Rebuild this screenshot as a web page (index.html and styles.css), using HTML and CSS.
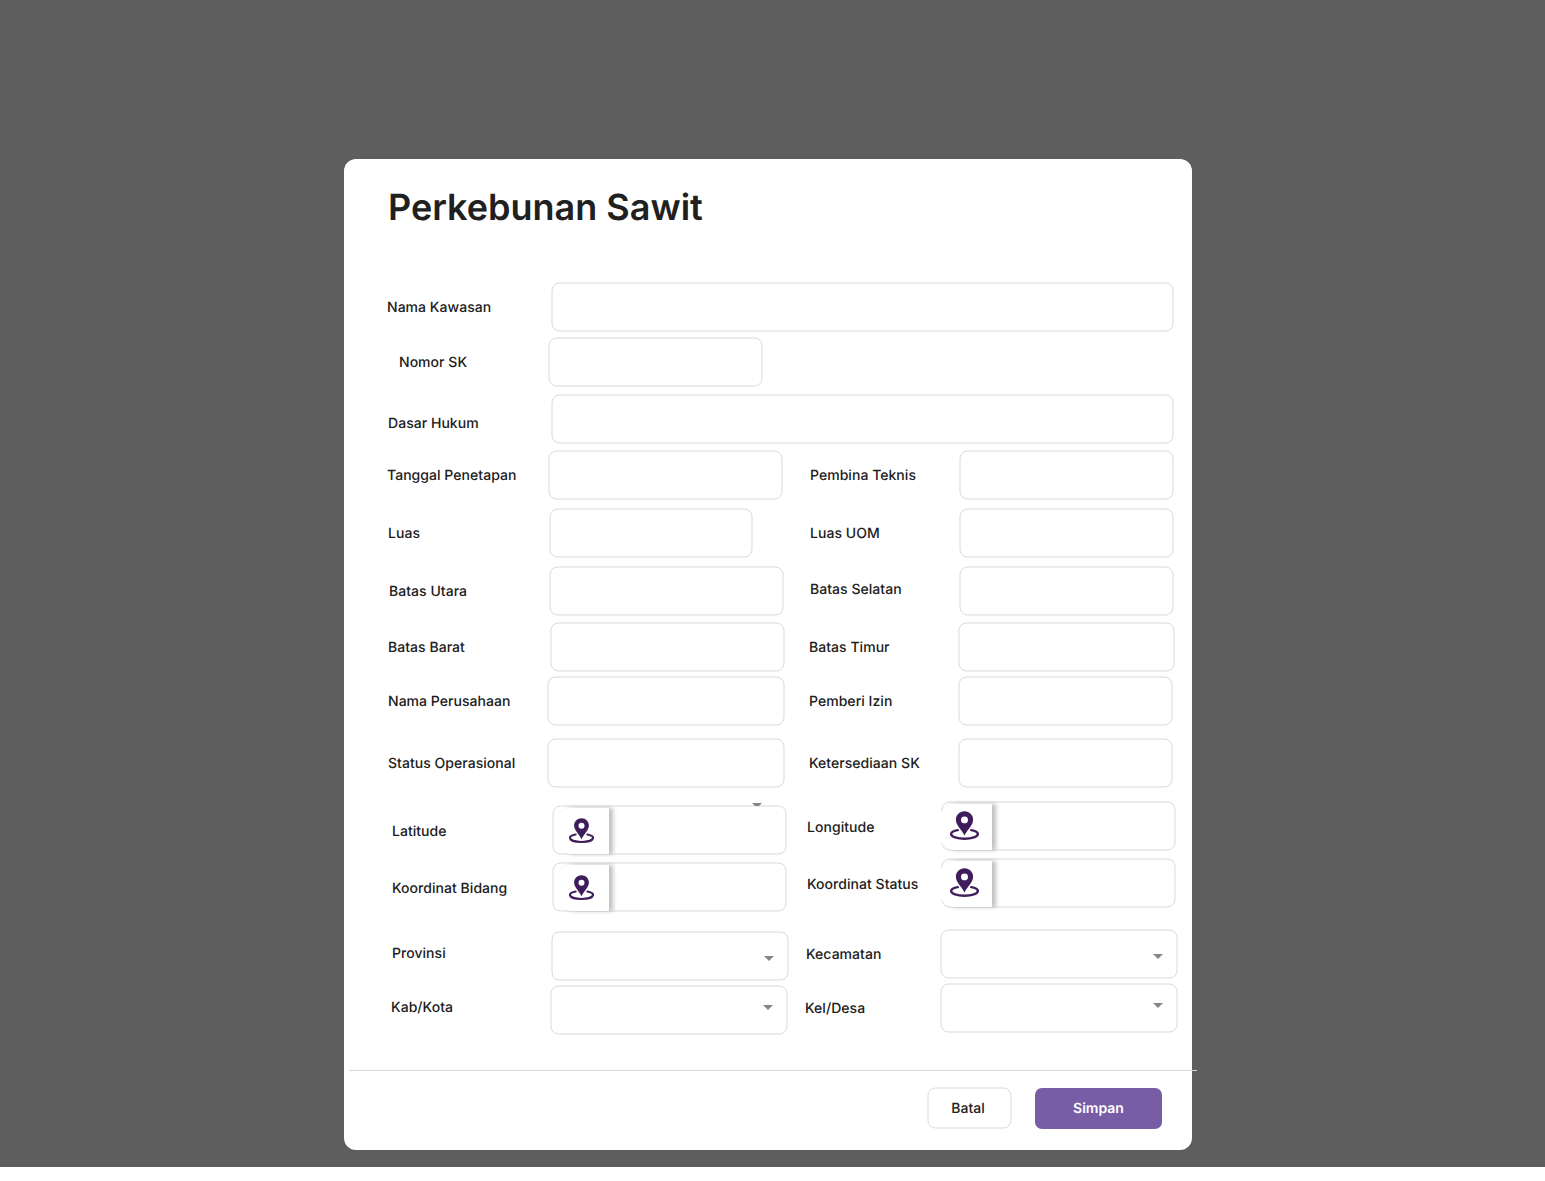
FILE: index.html
```html
<!DOCTYPE html>
<html lang="id">
<head>
<meta charset="utf-8">
<title>Perkebunan Sawit</title>
<link rel="stylesheet" href="styles.css">
</head>
<body>
<svg class="defs" aria-hidden="true">
  <symbol id="pin" viewBox="0 0 30 30">
    <path fill="currentColor" fill-rule="evenodd" d="M15 0.300c-5 0-8.900 3.800-8.900 8.700 0 5.600 5.800 10 8.900 16.400 3.100-6.400 8.900-10.800 8.900-16.400 0-4.900-3.900-8.700-8.900-8.700zM15 5.600a3.600 3.600 0 1 1 0 7.200a3.600 3.600 0 0 1 0-7.200z"/>
    <path fill="none" stroke="currentColor" stroke-width="2.500" stroke-linecap="round" d="M8 19.800C4 20.500 1.200 22 1.200 23.800C1.200 26.800 7.500 28.700 15 28.700S28.800 26.800 28.800 23.800C28.800 22 26 20.500 22 19.800"/>
  </symbol>
</svg>
<div class="overlay">
  <form class="modal">
    <h1 class="title">Perkebunan Sawit</h1>
    <div class="fields">
      <div class="row kawasan"><label>Nama Kawasan</label><div class="field"></div></div>
      <div class="row nomor"><label>Nomor SK</label><div class="field"></div></div>
      <div class="row hukum"><label>Dasar Hukum</label><div class="field"></div></div>
      <div class="row tanggal"><label>Tanggal Penetapan</label><div class="field"></div><label>Pembina Teknis</label><div class="field"></div></div>
      <div class="row luas"><label>Luas</label><div class="field"></div><label>Luas UOM</label><div class="field"></div></div>
      <div class="row utara"><label>Batas Utara</label><div class="field"></div><label>Batas Selatan</label><div class="field"></div></div>
      <div class="row barat"><label>Batas Barat</label><div class="field"></div><label>Batas Timur</label><div class="field"></div></div>
      <div class="row perusahaan"><label>Nama Perusahaan</label><div class="field"></div><label>Pemberi Izin</label><div class="field"></div></div>
      <div class="row status"><label>Status Operasional</label><div class="field"></div><label>Ketersediaan SK</label><div class="field"></div></div>
      <div class="row coord latitude">
        <label>Latitude</label><div class="field"><span class="tile"><svg class="pin"><use href="#pin"/></svg></span><i class="tick"></i></div>
        <label>Longitude</label><div class="field wide"><span class="tile"><svg class="pin"><use href="#pin"/></svg></span></div>
      </div>
      <div class="row coord bidang">
        <label>Koordinat Bidang</label><div class="field"><span class="tile"><svg class="pin"><use href="#pin"/></svg></span></div>
        <label>Koordinat Status</label><div class="field wide"><span class="tile"><svg class="pin"><use href="#pin"/></svg></span></div>
      </div>
      <div class="row region provinsi"><label>Provinsi</label><div class="field"><i class="caret"></i></div><label>Kecamatan</label><div class="field"><i class="caret"></i></div></div>
      <div class="row region kota"><label>Kab/Kota</label><div class="field"><i class="caret"></i></div><label>Kel/Desa</label><div class="field"><i class="caret"></i></div></div>
    </div>
    <div class="actions">
      <button type="button" class="btn cancel">Batal</button>
      <button type="button" class="btn save">Simpan</button>
    </div>
  </form>
</div>
</body>
</html>
```
FILE: styles.css
```css
* { box-sizing: border-box; }

body {
  margin: 0;
  background: #fff;
  color: #202020;
  font-family: Inter, "Liberation Sans", sans-serif;
  text-rendering: geometricPrecision;
}

.defs { display: block; width: 0; height: 0; }

.overlay {
  height: 1167px;
  padding: 159px 0 0 344px;
  background: #5e5e5e;
}

.modal {
  display: flex;
  flex-direction: column;
  width: 848px;
  height: 991px;
  border-radius: 12px;
  background: #fff;
}

.title {
  margin: 26px 0 0 44px;
  font-size: 36px;
  font-weight: 600;
  line-height: 44px;
}

.fields { margin: 53px 0 0 43px; }

.row {
  display: grid;
  height: 50px;
  margin-top: 6px;
  grid-template-columns: var(--cols);
}

label {
  padding-left: var(--x, 0);
  margin-top: var(--y, 0);
  font-size: 14px;
  font-weight: 460;
  letter-spacing: 0.04px;
  line-height: 52px;
  white-space: nowrap;
}

label:nth-of-type(2) {
  padding-left: var(--x2);
  margin-top: var(--y2, 0);
}

/* Hairline border centred between two device pixels */
.field {
  position: relative;
  height: 49px;
  margin-right: 1px;
  border: 1px solid #d9d9d9;
  border-radius: 8px;
  transform: translate(0.5px, 0.5px);
}

.kawasan { --cols: 164px 623px; margin-top: 0; }
.nomor { --cols: 161px 215px; --x: 12px; margin-top: 5px; }
.hukum { --cols: 164px 623px; --x: 1px; --y: 4px; margin-top: 7px; }
.tanggal { --cols: 161px 235px 176px 215px; --x2: 27px; }
.luas { --cols: 162px 204px 206px 215px; --x: 1px; --x2: 57px; margin-top: 8px; }
.utara { --cols: 162px 235px 175px 215px; --x: 2px; --x2: 26px; --y2: -2px; margin-top: 8px; }
.barat { --cols: 163px 235px 173px 217px; --x: 1px; --x2: 24px; }
.perusahaan { --cols: 160px 238px 173px 215px; --x: 1px; --x2: 24px; margin-top: 4px; }
.status { --cols: 160px 238px 173px 215px; --x: 1px; --x2: 24px; margin-top: 12px; }
.coord { --cols: 165px 235px 154px 235px; --x: 5px; --y: 1px; --x2: 20px; --y2: -3px; }
.latitude { margin-top: 17px; }
.bidang { margin-top: 7px; }
.provinsi { --cols: 164px 238px 151px 238px; --x: 5px; --y: -3px; --x2: 17px; --y2: -2px; margin-top: 19px; }
.kota { --cols: 163px 238px 152px 238px; --x: 4px; --y: -3px; --x2: 17px; --y2: -2px; margin-top: 4px; }

.coord .wide { margin-top: -4px; }
.region .field:last-child { margin-top: -2px; }

/* Contents of a field sit back on whole pixels */
.tile, .caret, .tick {
  position: absolute;
  transform: translate(-0.5px, -0.5px);
}

.tile {
  top: 2px;
  left: 4px;
  width: 52px;
  height: 46px;
  border-radius: 14px 0 0 14px;
  background: #fff;
  box-shadow: 4px 0 4px rgba(0, 0, 0, 0.25);
}

.wide .tile { left: -2px; }

.pin {
  position: absolute;
  top: 10px;
  left: 12px;
  width: 25px;
  height: 25px;
  color: #3f1d5c;
}

.wide .pin { top: 7px; left: 10px; width: 29px; height: 29px; }

.caret {
  top: 24px;
  right: 13px;
  border: 5px solid transparent;
  border-top-color: #868686;
  border-bottom: 0;
}

.kota .caret { top: 19px; }

.tick {
  top: -3px;
  right: 23px;
  width: 10px;
  height: 3px;
  background: #868686;
  clip-path: polygon(0 0, 100% 0, 7px 100%, 3px 100%);
}

.actions {
  display: flex;
  gap: 23px;
  width: 848px;
  height: 80px;
  margin: 35px 0 0 5px;
  padding: 16px 0 0 578px;
  border-top: 1px solid #d9d9d9;
}

.btn {
  height: 41px;
  padding: 0;
  border: 1px solid #d9d9d9;
  border-radius: 8px;
  background: #fff;
  color: #202020;
  font: 500 14px Inter, "Liberation Sans", sans-serif;
  text-rendering: geometricPrecision;
}

.cancel {
  width: 84px;
  margin-right: 1px;
  padding-right: 3px;
  transform: translate(0.5px, 0.5px);
}

.save {
  width: 127px;
  margin-top: 1px;
  padding-bottom: 1px;
  border: 0;
  border-radius: 7px;
  background: #775da6;
  color: #fff;
  font-weight: 600;
}
```
